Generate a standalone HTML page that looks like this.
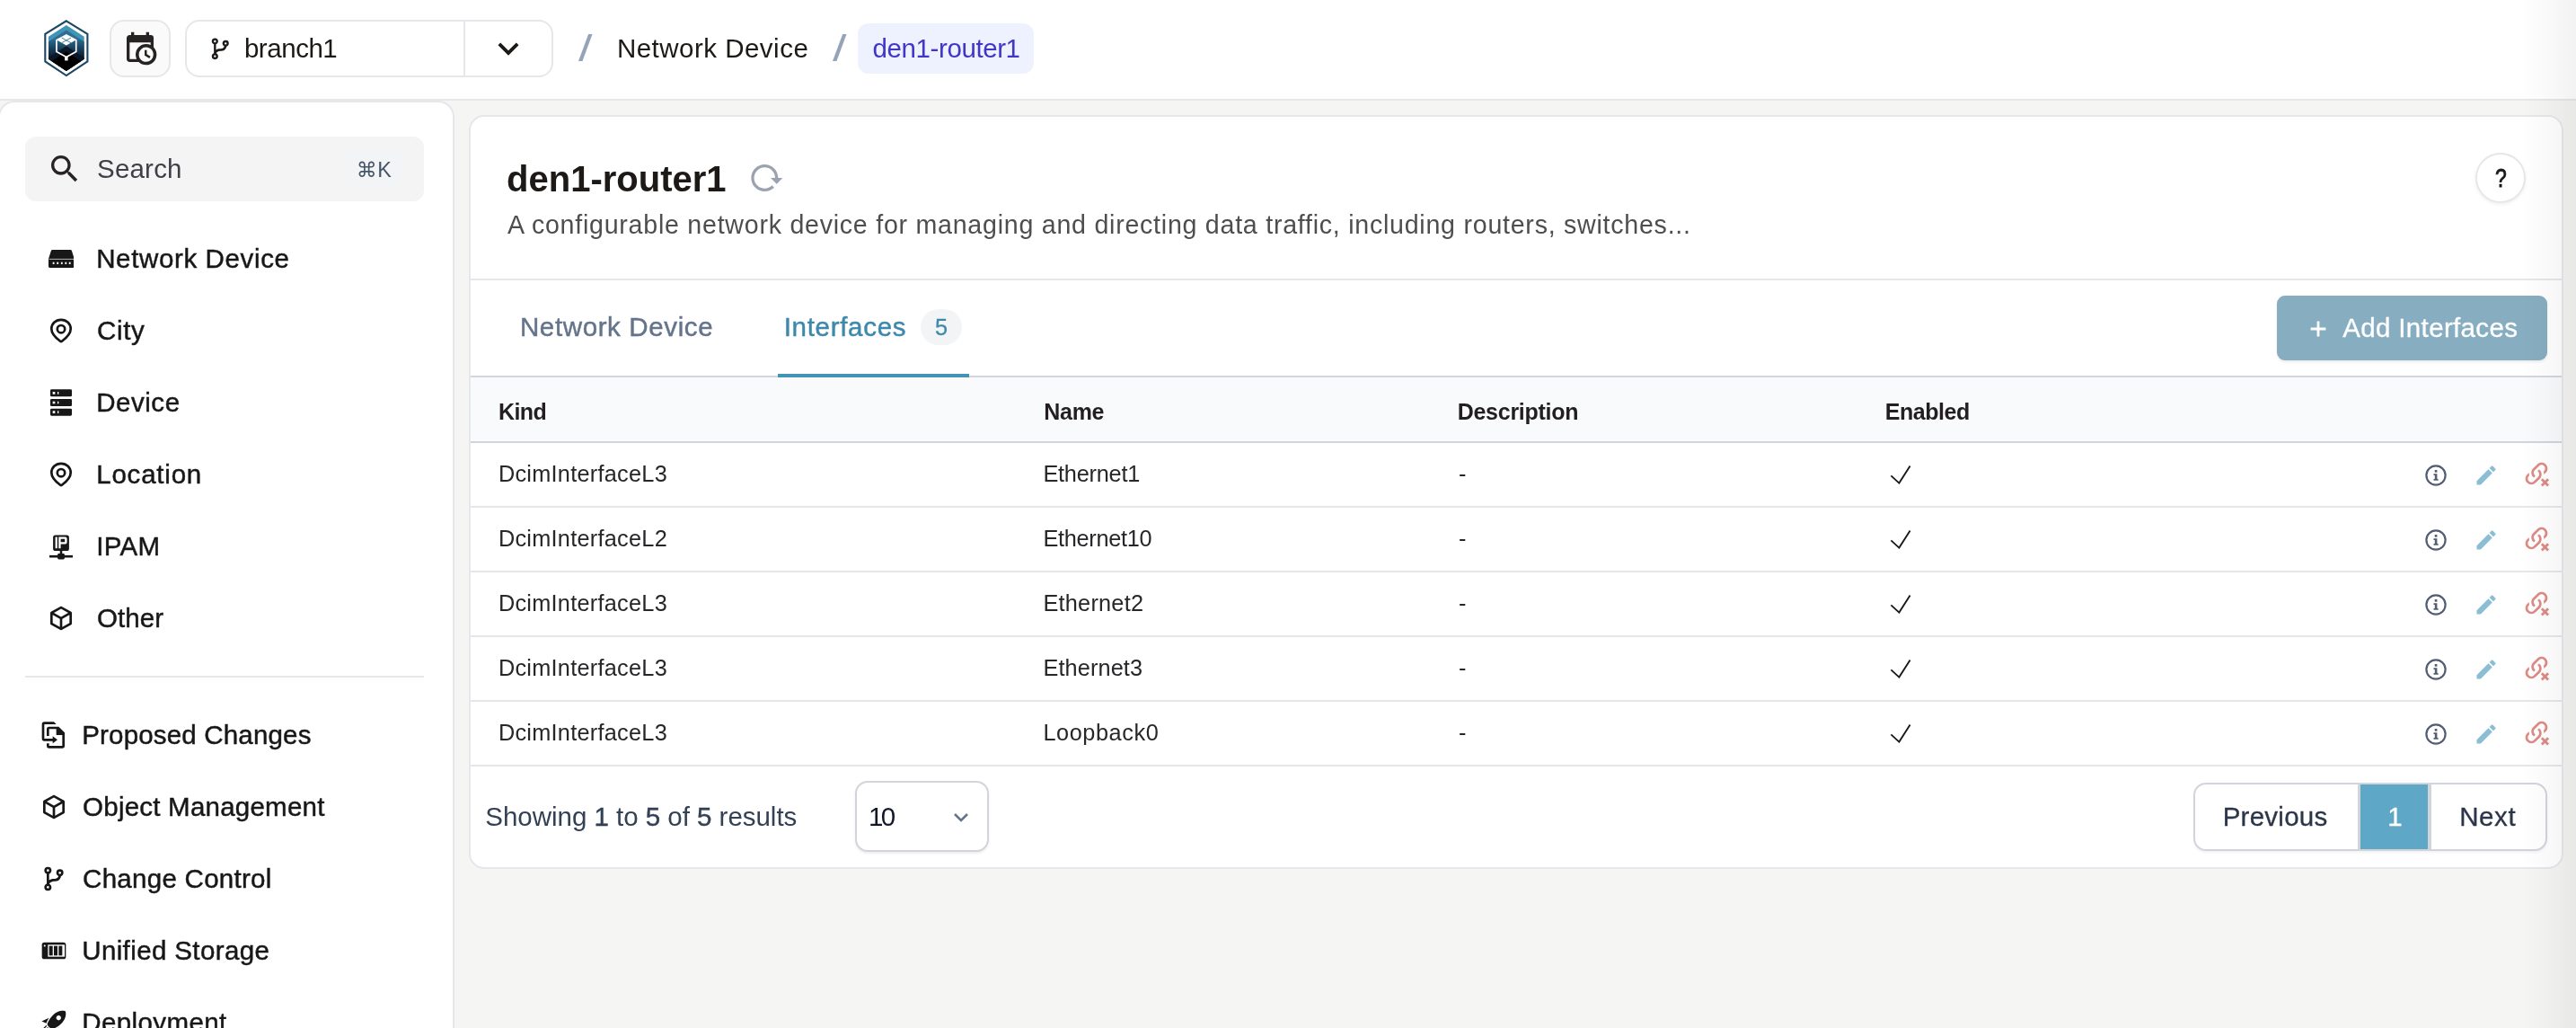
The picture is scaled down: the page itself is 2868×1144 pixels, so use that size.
<!DOCTYPE html>
<html lang="en">
<head>
<meta charset="utf-8">
<title>den1-router1 - Interfaces</title>
<style>
*{box-sizing:border-box;margin:0;padding:0}
html,body{width:2868px;height:1144px;overflow:hidden;background:#f5f5f4}
body{font-family:"Liberation Sans",Arial,sans-serif;color:#1c1917;position:relative}
.abs{position:absolute}
.t{position:absolute;white-space:nowrap;line-height:1}
.m{-webkit-text-stroke:0.4px #334155}
#app{position:absolute;left:0;top:0;width:2868px;height:1144px;will-change:transform}

</style>
</head>
<body>
<div id="app">
<div class="abs" style="left:0;top:0;width:2868px;height:112px;background:#fff;border-bottom:2px solid #e5e7eb"></div>
<svg class="abs" style="left:40px;top:14px" width="68" height="80" viewBox="0 0 68 80">
<defs>
<linearGradient id="lgA" gradientUnits="userSpaceOnUse" x1="0" y1="29" x2="0" y2="51"><stop offset="0" stop-color="#2e6f91"/><stop offset="0.5" stop-color="#1a405b"/><stop offset="1" stop-color="#0a1828"/></linearGradient>
<clipPath id="hexc"><polygon points="33.85,14.0 53.7,26.85 53.7,51.75 33.85,65.0 14.0,51.75 14.0,26.85"/></clipPath></defs>
<polygon points="33.85,9.3 57.4,23.9 57.4,54.4 33.85,70.1 10.3,54.4 10.3,23.9" fill="#fff" stroke="#1b4762" stroke-width="2.1" stroke-linejoin="miter"/>
<g clip-path="url(#hexc)">
<rect x="10" y="10" width="48" height="60" fill="#4194b8"/>
<polygon points="12,33.59 33.85,19.45 56,33.78 56,70 12,70" fill="url(#lgA)"/>
<polygon points="12,51.49 33.85,37.35 56,51.68 56,70 12,70" fill="#0b1727"/>
<polygon points="12,57.74 33.85,43.6 56,57.93 56,70 12,70" fill="#000"/>
</g>
<path d="M33.85,24.9 L44.75,30.7 V43.6 L33.85,49.4 L22.95,43.6 V30.7 Z" fill="none" stroke="#fff" stroke-width="1.7" stroke-linejoin="round"/>
<path d="M33.85,25.3 L44.1,30.75 L33.85,36.6 L23.6,30.75 Z" fill="#fff"/>
<g stroke="#2f7597" stroke-width="0.9"><line x1="28.7" y1="28.0" x2="39.0" y2="33.7"/><line x1="39.0" y1="28.0" x2="28.7" y2="33.7"/></g>
<rect x="32.1" y="49.0" width="3.5" height="4.4" fill="#fff"/>
</svg>
<div class="abs" style="left:122px;top:22px;width:68px;height:64px;border:2px solid #e5e7eb;border-radius:16px;background:#fafafa"></div>
<svg class="abs" style="left:136.00px;top:34.30px" width="40" height="40" viewBox="0 0 24 24"><path fill="#262322" d="M15,13H16.5V15.82L18.94,17.23L18.19,18.53L15,16.69V13M19,8H5V19H9.67C9.24,18.09 9,17.07 9,16A7,7 0 0,1 16,9C17.07,9 18.09,9.24 19,9.67V8M5,21C3.89,21 3,20.1 3,19V5C3,3.89 3.89,3 5,3H6V1H8V3H16V1H18V3H19A2,2 0 0,1 21,5V11.1C22.24,12.36 23,14.09 23,16A7,7 0 0,1 16,23C14.09,23 12.36,22.24 11.1,21H5M16,11.15A4.85,4.85 0 0,0 11.15,16C11.15,18.68 13.32,20.85 16,20.85A4.85,4.85 0 0,0 20.85,16C20.85,13.32 18.68,11.15 16,11.15Z"/></svg>
<div class="abs" style="left:206px;top:22px;width:410px;height:64px;border:2px solid #e5e7eb;border-radius:16px;background:#fff"></div>
<div class="abs" style="left:516px;top:24px;width:2px;height:60px;background:#e5e7eb"></div>
<svg class="abs" style="left:231.25px;top:40.05px" width="28.5" height="28.5" viewBox="0 0 24 24"><path fill="#1c1917" d="M13,14C9.64,14 8.54,15.35 8.18,16.24C9.25,16.7 10,17.76 10,19A3,3 0 0,1 7,22A3,3 0 0,1 4,19C4,17.69 4.83,16.58 6,16.17V7.83C4.83,7.42 4,6.31 4,5A3,3 0 0,1 7,2A3,3 0 0,1 10,5C10,6.31 9.17,7.42 8,7.83V13.12C8.88,12.47 10.16,12 12,12C14.67,12 15.56,10.66 15.85,9.77C14.77,9.32 14,8.25 14,7A3,3 0 0,1 17,4A3,3 0 0,1 20,7C20,8.34 19.12,9.5 17.91,9.86C17.65,11.29 16.68,14 13,14M7,18A1,1 0 0,0 6,19A1,1 0 0,0 7,20A1,1 0 0,0 8,19A1,1 0 0,0 7,18M7,4A1,1 0 0,0 6,5A1,1 0 0,0 7,6A1,1 0 0,0 8,5A1,1 0 0,0 7,4M17,6A1,1 0 0,0 16,7A1,1 0 0,0 17,8A1,1 0 0,0 18,7A1,1 0 0,0 17,6Z"/></svg>
<div class="t" id="branch1" style="left:271.93px;top:38.78px;font-size:29.5px;font-weight:400;color:#1c1917;letter-spacing:-0.460px;">branch1</div>
<svg class="abs" style="left:543.00px;top:31.00px" width="46" height="46" viewBox="0 0 24 24"><path fill="#1c1917" d="M7.41,8.58L12,13.17L16.59,8.58L18,10L12,16L6,10L7.41,8.58Z"/></svg>
<div class="t" id="sl1" style="left:643.76px;top:34.29px;font-size:41px;font-weight:400;color:#94a3b8;letter-spacing:0.000px;transform-origin:0 50%;transform:scaleX(1.36);">/</div>
<div class="t" id="bc1" style="left:686.95px;top:38.78px;font-size:29.5px;font-weight:400;color:#1c1917;letter-spacing:0.484px;">Network Device</div>
<div class="t" id="sl2" style="left:927.00px;top:34.29px;font-size:41px;font-weight:400;color:#94a3b8;letter-spacing:0.000px;transform-origin:0 50%;transform:scaleX(1.36);">/</div>
<div class="abs" style="left:955px;top:26px;width:196px;height:56px;border-radius:12px;background:#eef2ff"></div>
<div class="t" id="bc2" style="left:971.60px;top:38.78px;font-size:29.5px;font-weight:400;color:#4036c8;letter-spacing:-0.409px;">den1-router1</div>
<div class="abs" style="left:-2px;top:112px;width:508px;height:1100px;background:#fff;border:2px solid #e5e7eb;border-radius:18px 18px 0 0"></div>
<div class="abs" style="left:28px;top:152px;width:444px;height:72px;background:#f4f4f5;border-radius:12px"></div>
<svg class="abs" style="left:52.00px;top:167.50px" width="40" height="40" viewBox="0 0 24 24"><path fill="#262322" d="M9.5,3A6.5,6.5 0 0,1 16,9.5C16,11.11 15.41,12.59 14.44,13.73L14.71,14H15.5L20.5,19L19,20.5L14,15.5V14.71L13.73,14.44C12.59,15.41 11.11,16 9.5,16A6.5,6.5 0 0,1 3,9.5A6.5,6.5 0 0,1 9.5,3M9.5,5C7,5 5,7 5,9.5C5,12 7,14 9.5,14C12,14 14,12 14,9.5C14,7 12,5 9.5,5Z"/></svg>
<div class="t" id="search" style="left:108.10px;top:172.53px;font-size:29.5px;font-weight:400;color:#3f3f46;letter-spacing:0.180px;">Search</div>
<div class="abs" style="left:386px;top:168px;width:62px;height:40px;background:#f3f4f6;border-radius:9px"></div>
<div class="t" id="cmdk" style="left:396.80px;top:175.88px;font-size:25.3px;font-weight:400;color:#475569;letter-spacing:0.350px;"><span style="font-family:'DejaVu Sans',sans-serif;font-size:23px">&#8984;</span><span style="font-size:23.4px">K</span></div>
<svg class="abs" style="left:53.60px;top:278.00px" width="28.8" height="20" viewBox="0 0 28.8 20"><path fill="#171717" d="M4.4,0 H24.4 Q25.6,0 25.9,1.1 L28.6,9.6 Q28.8,10.2 28.8,10.8 V18.6 Q28.8,20 27.4,20 H1.4 Q0,20 0,18.6 V10.8 Q0,10.2 0.2,9.6 L2.9,1.1 Q3.2,0 4.4,0 Z"/><rect x="0.6" y="9.9" width="27.6" height="0.9" fill="#fff" opacity="0.75"/><rect x="4.70" y="13.7" width="1.8" height="2.3" fill="#fff"/><rect x="9.30" y="13.7" width="1.8" height="2.3" fill="#fff"/><rect x="13.90" y="13.7" width="1.8" height="2.3" fill="#fff"/><rect x="18.40" y="13.7" width="1.8" height="2.3" fill="#fff"/><rect x="22.80" y="13.7" width="1.8" height="2.3" fill="#fff"/></svg>
<div class="t" id="sb0" style="left:107.20px;top:273.03px;font-size:29.5px;font-weight:400;color:#171717;letter-spacing:0.629px;-webkit-text-stroke:0.45px #171717;">Network Device</div>
<svg class="abs" style="left:55.00px;top:353.50px" width="26" height="29" viewBox="0 0 26 29"><path fill="none" stroke="#171717" stroke-width="2.7" stroke-linejoin="round" d="M13,1.8 C19.2,1.8 23.7,6.3 23.7,12.0 C23.7,17.6 16.9,23.6 13.6,26.0 Q13,26.4 12.4,26.0 C9.1,23.6 2.3,17.6 2.3,12.0 C2.3,6.3 6.8,1.8 13,1.8 Z"/><circle cx="13" cy="12.2" r="4.2" fill="none" stroke="#171717" stroke-width="2.7"/></svg>
<div class="t" id="sb1" style="left:108.10px;top:353.03px;font-size:29.5px;font-weight:400;color:#171717;letter-spacing:0.600px;-webkit-text-stroke:0.45px #171717;">City</div>
<svg class="abs" style="left:51.80px;top:432.00px" width="32" height="32" viewBox="0 0 24 24"><path fill="#171717" d="M4,1H20A1,1 0 0,1 21,2V6A1,1 0 0,1 20,7H4A1,1 0 0,1 3,6V2A1,1 0 0,1 4,1M4,9H20A1,1 0 0,1 21,10V14A1,1 0 0,1 20,15H4A1,1 0 0,1 3,14V10A1,1 0 0,1 4,9M4,17H20A1,1 0 0,1 21,18V22A1,1 0 0,1 20,23H4A1,1 0 0,1 3,22V18A1,1 0 0,1 4,17M9,5H10V3H9V5M9,13H10V11H9V13M9,21H10V19H9V21M5,3V5H7V3H5M5,11V13H7V11H5M5,19V21H7V19H5Z"/></svg>
<div class="t" id="sb2" style="left:107.20px;top:433.03px;font-size:29.5px;font-weight:400;color:#171717;letter-spacing:0.540px;-webkit-text-stroke:0.45px #171717;">Device</div>
<svg class="abs" style="left:55.00px;top:513.50px" width="26" height="29" viewBox="0 0 26 29"><path fill="none" stroke="#171717" stroke-width="2.7" stroke-linejoin="round" d="M13,1.8 C19.2,1.8 23.7,6.3 23.7,12.0 C23.7,17.6 16.9,23.6 13.6,26.0 Q13,26.4 12.4,26.0 C9.1,23.6 2.3,17.6 2.3,12.0 C2.3,6.3 6.8,1.8 13,1.8 Z"/><circle cx="13" cy="12.2" r="4.2" fill="none" stroke="#171717" stroke-width="2.7"/></svg>
<div class="t" id="sb3" style="left:107.20px;top:513.03px;font-size:29.5px;font-weight:400;color:#171717;letter-spacing:0.793px;-webkit-text-stroke:0.45px #171717;">Location</div>
<svg class="abs" style="left:55.00px;top:594.70px" width="26" height="29" viewBox="0 0 26 29"><rect x="4.1" y="0.4" width="17.8" height="17.6" rx="2.6" fill="#171717"/><rect x="6.6" y="2.6" width="2.2" height="12.6" fill="#fff"/><path fill="#fff" fill-rule="evenodd" d="M10.3,2.6 H17.6 Q19.6,2.6 19.6,4.6 V8.4 Q19.6,10.4 17.6,10.4 H12.6 V15.2 H10.3 Z M12.6,4.8 V8.2 H17.2 V4.8 Z"/><rect x="11.7" y="18" width="2.6" height="4.6" fill="#171717"/><rect x="0" y="22.9" width="26" height="2.6" fill="#171717"/><rect x="9.1" y="21.0" width="7.8" height="6.4" rx="1.4" fill="#171717"/></svg>
<div class="t" id="sb4" style="left:107.20px;top:593.03px;font-size:29.5px;font-weight:400;color:#171717;letter-spacing:0.300px;-webkit-text-stroke:0.45px #171717;">IPAM</div>
<svg class="abs" style="left:52.00px;top:672.00px" width="32" height="32" viewBox="0 0 24 24"><path fill="#171717" d="M21,16.5C21,16.88 20.79,17.21 20.47,17.38L12.57,21.82C12.41,21.94 12.21,22 12,22C11.79,22 11.59,21.94 11.43,21.82L3.53,17.38C3.21,17.21 3,16.88 3,16.5V7.5C3,7.12 3.21,6.79 3.53,6.62L11.43,2.18C11.59,2.06 11.79,2 12,2C12.21,2 12.41,2.06 12.57,2.18L20.47,6.62C20.79,6.79 21,7.12 21,7.5V16.5M12,4.15L6.04,7.5L12,10.85L17.96,7.5L12,4.15M5,15.91L11,19.29V12.58L5,9.21V15.91M19,15.91V9.21L13,12.58V19.29L19,15.91Z"/></svg>
<div class="t" id="sb5" style="left:108.10px;top:673.03px;font-size:29.5px;font-weight:400;color:#171717;letter-spacing:0.033px;-webkit-text-stroke:0.45px #171717;">Other</div>
<div class="abs" style="left:28px;top:752px;width:444px;height:2px;background:#e5e7eb"></div>
<svg class="abs" style="left:44.00px;top:802.00px" width="32" height="32" viewBox="0 0 24 24"><path fill="#171717" d="M14,3L12,1H4A2,2 0 0,0 2,3V15A2,2 0 0,0 4,17H11V19L15,16L11,13V15H4V3H14M21,10V21A2,2 0 0,1 19,23H8A2,2 0 0,1 6,21V19H8V21H19V12H14V7H8V12.8H6V7A2,2 0 0,1 8,5H16L21,10Z"/></svg>
<div class="t" id="sl0x" style="left:91.20px;top:803.03px;font-size:29.5px;font-weight:400;color:#171717;letter-spacing:0.180px;-webkit-text-stroke:0.45px #171717;">Proposed Changes</div>
<svg class="abs" style="left:44.00px;top:882.00px" width="32" height="32" viewBox="0 0 24 24"><path fill="#171717" d="M21,16.5C21,16.88 20.79,17.21 20.47,17.38L12.57,21.82C12.41,21.94 12.21,22 12,22C11.79,22 11.59,21.94 11.43,21.82L3.53,17.38C3.21,17.21 3,16.88 3,16.5V7.5C3,7.12 3.21,6.79 3.53,6.62L11.43,2.18C11.59,2.06 11.79,2 12,2C12.21,2 12.41,2.06 12.57,2.18L20.47,6.62C20.79,6.79 21,7.12 21,7.5V16.5M12,4.15L6.04,7.5L12,10.85L17.96,7.5L12,4.15M5,15.91L11,19.29V12.58L5,9.21V15.91M19,15.91V9.21L13,12.58V19.29L19,15.91Z"/></svg>
<div class="t" id="sl1x" style="left:92.10px;top:883.03px;font-size:29.5px;font-weight:400;color:#171717;letter-spacing:0.225px;-webkit-text-stroke:0.45px #171717;">Object Management</div>
<svg class="abs" style="left:44.00px;top:962.00px" width="32" height="32" viewBox="0 0 24 24"><path fill="#171717" d="M13,14C9.64,14 8.54,15.35 8.18,16.24C9.25,16.7 10,17.76 10,19A3,3 0 0,1 7,22A3,3 0 0,1 4,19C4,17.69 4.83,16.58 6,16.17V7.83C4.83,7.42 4,6.31 4,5A3,3 0 0,1 7,2A3,3 0 0,1 10,5C10,6.31 9.17,7.42 8,7.83V13.12C8.88,12.47 10.16,12 12,12C14.67,12 15.56,10.66 15.85,9.77C14.77,9.32 14,8.25 14,7A3,3 0 0,1 17,4A3,3 0 0,1 20,7C20,8.34 19.12,9.5 17.91,9.86C17.65,11.29 16.68,14 13,14M7,18A1,1 0 0,0 6,19A1,1 0 0,0 7,20A1,1 0 0,0 8,19A1,1 0 0,0 7,18M7,4A1,1 0 0,0 6,5A1,1 0 0,0 7,6A1,1 0 0,0 8,5A1,1 0 0,0 7,4M17,6A1,1 0 0,0 16,7A1,1 0 0,0 17,8A1,1 0 0,0 18,7A1,1 0 0,0 17,6Z"/></svg>
<div class="t" id="sl2x" style="left:92.10px;top:963.03px;font-size:29.5px;font-weight:400;color:#171717;letter-spacing:0.277px;-webkit-text-stroke:0.45px #171717;">Change Control</div>
<svg class="abs" style="left:44.00px;top:1042.00px" width="32" height="32" viewBox="0 0 24 24"><path fill="#171717" d="M4,5H20A2,2 0 0,1 22,7V17A2,2 0 0,1 20,19H4A2,2 0 0,1 2,17V7A2,2 0 0,1 4,5Z"/><rect x="7" y="7" width="14" height="10" fill="#fff"/><rect x="8" y="8" width="3" height="8" fill="#171717"/><rect x="12" y="8" width="3" height="8" fill="#171717"/><rect x="16" y="8" width="3" height="8" fill="#171717"/><circle cx="4.3" cy="7.9" r="0.75" fill="#fff"/></svg>
<div class="t" id="sl3x" style="left:91.20px;top:1043.03px;font-size:29.5px;font-weight:400;color:#171717;letter-spacing:0.385px;-webkit-text-stroke:0.45px #171717;">Unified Storage</div>
<svg class="abs" style="left:44.00px;top:1122.00px" width="32" height="32" viewBox="0 0 24 24"><path fill="#171717" d="M13.13 22.19L11.5 18.36C13.07 17.78 14.54 17 15.9 16.09L13.13 22.19M5.64 12.5L1.81 10.87L7.91 8.1C7 9.46 6.22 10.93 5.64 12.5M21.61 2.39C21.61 2.39 16.66 .269 11 5.93C8.81 8.12 7.5 10.53 6.65 12.64C6.37 13.39 6.56 14.21 7.11 14.77L9.24 16.89C9.79 17.45 10.61 17.63 11.36 17.35C13.5 16.53 15.88 15.19 18.07 13C23.73 7.34 21.61 2.39 21.61 2.39M14.54 9.46C13.76 8.68 13.76 7.41 14.54 6.63S16.59 5.85 17.37 6.63C18.14 7.41 18.15 8.68 17.37 9.46C16.59 10.24 15.32 10.24 14.54 9.46M8.88 16.53L7.47 15.12L8.88 16.53M6.24 22L9.88 18.36C9.54 18.27 9.21 18.12 8.91 17.91L4.83 22H6.24M2 22H3.41L8.18 17.24L6.76 15.83L2 20.59V22M2 19.17L6.09 15.09C5.88 14.79 5.73 14.47 5.64 14.12L2 17.76V19.17Z"/></svg>
<div class="t" id="sl4x" style="left:91.20px;top:1123.03px;font-size:29.5px;font-weight:400;color:#171717;letter-spacing:0.400px;-webkit-text-stroke:0.45px #171717;">Deployment</div>
<div class="abs" style="left:522px;top:128px;width:2332px;height:839px;background:#fff;border:2px solid #e5e7eb;border-radius:17px;overflow:hidden"><div class="abs" style="left:0;top:180px;width:2328px;height:2px;background:#e5e7eb"></div><div class="abs" style="left:0;top:288px;width:2328px;height:2px;background:#d4d6dc"></div><div class="abs" style="left:0;top:290px;width:2328px;height:71px;background:#f9fafb"></div><div class="abs" style="left:0;top:361px;width:2328px;height:2px;background:#d1d5db"></div><div class="abs" style="left:0;top:433px;width:2328px;height:2px;background:#e5e7eb"></div><div class="abs" style="left:0;top:505px;width:2328px;height:2px;background:#e5e7eb"></div><div class="abs" style="left:0;top:577px;width:2328px;height:2px;background:#e5e7eb"></div><div class="abs" style="left:0;top:649px;width:2328px;height:2px;background:#e5e7eb"></div><div class="abs" style="left:0;top:721px;width:2328px;height:2px;background:#e5e7eb"></div></div>
<div class="t" id="title" style="left:564.10px;top:178.54px;font-size:40px;font-weight:700;color:#1c1917;letter-spacing:0.000px;">den1-router1</div>
<svg class="abs" style="left:832.70px;top:178.00px" width="40" height="40" viewBox="0 0 24 24"><path fill="#9ca3b0" d="M2 12C2 16.97 6.03 21 11 21C13.39 21 15.68 20.06 17.4 18.4L15.9 16.9C14.63 18.25 12.86 19 11 19C4.76 19 1.64 11.46 6.05 7.05C10.46 2.64 18 5.77 18 12H15L19 16H19.1L23 12H20C20 7.03 15.97 3 11 3C6.03 3 2 7.03 2 12Z"/></svg>
<div class="t" id="desc" style="left:565.00px;top:235.79px;font-size:28.6px;font-weight:400;color:#4e4e50;letter-spacing:0.746px;">A configurable network device for managing and directing data traffic, including routers, switches...</div>
<div class="abs" style="left:2756px;top:170px;width:56px;height:56px;border-radius:50%;border:2px solid #e5e7eb;background:#fff;box-shadow:0 2px 4px rgba(0,0,0,0.06)"></div>
<div class="t" id="help" style="left:2777.77px;top:183.03px;font-size:29.5px;font-weight:400;color:#18181b;letter-spacing:0.000px;-webkit-text-stroke:0.9px #18181b;transform-origin:0 50%;transform:scaleX(0.78);">?</div>
<div class="t" id="tab1" style="left:578.94px;top:348.78px;font-size:29.5px;font-weight:400;color:#64748b;letter-spacing:0.623px;-webkit-text-stroke:0.45px #64748b;">Network Device</div>
<div class="t" id="tab2" style="left:872.70px;top:348.78px;font-size:29.5px;font-weight:400;color:#3d89ab;letter-spacing:0.700px;-webkit-text-stroke:0.45px #3d89ab;">Interfaces</div>
<div class="abs" style="left:1025px;top:344px;width:46px;height:40px;border-radius:20px;background:#f3f4f6"></div>
<div class="t" id="badge" style="left:1041.10px;top:351.58px;font-size:25.3px;font-weight:400;color:#3d89ab;letter-spacing:0.000px;-webkit-text-stroke:0.3px #3d89ab;">5</div>
<div class="abs" style="left:866px;top:416px;width:213px;height:4px;background:#4393b6"></div>
<div class="abs" style="left:2535px;top:329px;width:301px;height:72px;border-radius:9px;background:#87adc0;box-shadow:0 2px 3px rgba(0,0,0,0.08)"></div>
<svg class="abs" style="left:2571.2px;top:355.6px" width="20" height="20" viewBox="0 0 20 20"><path d="M10,1.6V18.4M1.6,10H18.4" stroke="#fff" stroke-width="2.8" fill="none"/></svg>
<div class="t" id="addi" style="left:2608.23px;top:349.53px;font-size:29.5px;font-weight:400;color:#fff;letter-spacing:0.347px;-webkit-text-stroke:0.3px #fff;">Add Interfaces</div>
<div class="t" id="hk" style="left:554.93px;top:445.84px;font-size:25.0px;font-weight:700;color:#231f20;letter-spacing:-0.600px;">Kind</div>
<div class="t" id="hn" style="left:1162.34px;top:445.84px;font-size:25.0px;font-weight:700;color:#231f20;letter-spacing:-0.300px;">Name</div>
<div class="t" id="hd" style="left:1622.70px;top:445.84px;font-size:25.0px;font-weight:700;color:#231f20;letter-spacing:-0.268px;">Description</div>
<div class="t" id="he" style="left:2098.70px;top:445.84px;font-size:25.0px;font-weight:700;color:#231f20;letter-spacing:-0.450px;">Enabled</div>
<div class="t" id="rk0" style="left:554.93px;top:514.98px;font-size:25.3px;font-weight:400;color:#27272a;letter-spacing:0.257px;">DcimInterfaceL3</div>
<div class="t" id="rn0" style="left:1161.43px;top:514.98px;font-size:25.3px;font-weight:400;color:#27272a;letter-spacing:-0.225px;">Ethernet1</div>
<div class="t" id="rd0" style="left:1624.10px;top:514.98px;font-size:25.3px;font-weight:400;color:#27272a;letter-spacing:0.000px;">-</div>
<svg class="abs" style="left:2100px;top:513px" width="32" height="32" viewBox="0 0 32 32"><path d="M5.4,16.4 L14.4,24.6 L26.6,5.6" fill="none" stroke="#1c1917" stroke-width="1.9"/></svg>
<svg class="abs" style="left:2698.00px;top:515.00px" width="28" height="28" viewBox="0 0 28 28"><circle cx="14" cy="14" r="10.6" fill="none" stroke="#535d72" stroke-width="2.2"/><rect x="12.7" y="8.0" width="2.7" height="2.7" fill="#535d72"/><path fill="#535d72" d="M11.5,12.2 H15.4 V18.0 H16.6 V19.8 H11.5 V18.0 H12.8 V14.0 H11.5 Z"/></svg>
<svg class="abs" style="left:2754.00px;top:515.20px" width="28" height="28" viewBox="0 0 24 24"><path fill="#8bbdd4" d="M20.71,7.04C21.1,6.65 21.1,6 20.71,5.63L18.37,3.29C18,2.9 17.35,2.9 16.96,3.29L15.12,5.12L18.87,8.87M3,17.25V21H6.75L17.81,9.93L14.06,6.18L3,17.25Z"/></svg>
<svg class="abs" style="left:2807.90px;top:510.60px" width="32" height="32" viewBox="0 0 24 24"><path fill="#de8a84" d="M10.59,13.41C11,13.8 11,14.44 10.59,14.83C10.2,15.22 9.56,15.22 9.17,14.83C7.22,12.88 7.22,9.71 9.17,7.76V7.76L12.71,4.22C14.66,2.27 17.83,2.27 19.78,4.22C21.73,6.17 21.73,9.34 19.78,11.29L18.29,12.78C18.3,11.96 18.17,11.14 17.89,10.36L18.36,9.88C19.54,8.71 19.54,6.81 18.36,5.64C17.19,4.46 15.29,4.46 14.12,5.64L10.59,9.17C9.41,10.34 9.41,12.24 10.59,13.41M13.41,9.17C13.8,8.78 14.44,8.78 14.83,9.17C16.78,11.12 16.78,14.29 14.83,16.24V16.24L11.29,19.78C9.34,21.73 6.17,21.73 4.22,19.78C2.27,17.83 2.27,14.66 4.22,12.71L5.71,11.22C5.7,12.04 5.83,12.86 6.11,13.65L5.64,14.12C4.46,15.29 4.46,17.19 5.64,18.36C6.81,19.54 8.71,19.54 9.88,18.36L13.41,14.83C14.59,13.66 14.59,11.76 13.41,10.59C13,10.2 13,9.56 13.41,9.17Z"/><path d="M16.4,16.65 L21.8,22.05 M21.8,16.65 L16.4,22.05" stroke="#de8a84" stroke-width="2.15" fill="none"/></svg>
<div class="t" id="rk1" style="left:554.93px;top:586.98px;font-size:25.3px;font-weight:400;color:#27272a;letter-spacing:0.257px;">DcimInterfaceL2</div>
<div class="t" id="rn1" style="left:1161.43px;top:586.98px;font-size:25.3px;font-weight:400;color:#27272a;letter-spacing:-0.300px;">Ethernet10</div>
<div class="t" id="rd1" style="left:1624.10px;top:586.98px;font-size:25.3px;font-weight:400;color:#27272a;letter-spacing:0.000px;">-</div>
<svg class="abs" style="left:2100px;top:585px" width="32" height="32" viewBox="0 0 32 32"><path d="M5.4,16.4 L14.4,24.6 L26.6,5.6" fill="none" stroke="#1c1917" stroke-width="1.9"/></svg>
<svg class="abs" style="left:2698.00px;top:587.00px" width="28" height="28" viewBox="0 0 28 28"><circle cx="14" cy="14" r="10.6" fill="none" stroke="#535d72" stroke-width="2.2"/><rect x="12.7" y="8.0" width="2.7" height="2.7" fill="#535d72"/><path fill="#535d72" d="M11.5,12.2 H15.4 V18.0 H16.6 V19.8 H11.5 V18.0 H12.8 V14.0 H11.5 Z"/></svg>
<svg class="abs" style="left:2754.00px;top:587.20px" width="28" height="28" viewBox="0 0 24 24"><path fill="#8bbdd4" d="M20.71,7.04C21.1,6.65 21.1,6 20.71,5.63L18.37,3.29C18,2.9 17.35,2.9 16.96,3.29L15.12,5.12L18.87,8.87M3,17.25V21H6.75L17.81,9.93L14.06,6.18L3,17.25Z"/></svg>
<svg class="abs" style="left:2807.90px;top:582.60px" width="32" height="32" viewBox="0 0 24 24"><path fill="#de8a84" d="M10.59,13.41C11,13.8 11,14.44 10.59,14.83C10.2,15.22 9.56,15.22 9.17,14.83C7.22,12.88 7.22,9.71 9.17,7.76V7.76L12.71,4.22C14.66,2.27 17.83,2.27 19.78,4.22C21.73,6.17 21.73,9.34 19.78,11.29L18.29,12.78C18.3,11.96 18.17,11.14 17.89,10.36L18.36,9.88C19.54,8.71 19.54,6.81 18.36,5.64C17.19,4.46 15.29,4.46 14.12,5.64L10.59,9.17C9.41,10.34 9.41,12.24 10.59,13.41M13.41,9.17C13.8,8.78 14.44,8.78 14.83,9.17C16.78,11.12 16.78,14.29 14.83,16.24V16.24L11.29,19.78C9.34,21.73 6.17,21.73 4.22,19.78C2.27,17.83 2.27,14.66 4.22,12.71L5.71,11.22C5.7,12.04 5.83,12.86 6.11,13.65L5.64,14.12C4.46,15.29 4.46,17.19 5.64,18.36C6.81,19.54 8.71,19.54 9.88,18.36L13.41,14.83C14.59,13.66 14.59,11.76 13.41,10.59C13,10.2 13,9.56 13.41,9.17Z"/><path d="M16.4,16.65 L21.8,22.05 M21.8,16.65 L16.4,22.05" stroke="#de8a84" stroke-width="2.15" fill="none"/></svg>
<div class="t" id="rk2" style="left:554.93px;top:658.98px;font-size:25.3px;font-weight:400;color:#27272a;letter-spacing:0.257px;">DcimInterfaceL3</div>
<div class="t" id="rn2" style="left:1161.43px;top:658.98px;font-size:25.3px;font-weight:400;color:#27272a;letter-spacing:0.230px;">Ethernet2</div>
<div class="t" id="rd2" style="left:1624.10px;top:658.98px;font-size:25.3px;font-weight:400;color:#27272a;letter-spacing:0.000px;">-</div>
<svg class="abs" style="left:2100px;top:657px" width="32" height="32" viewBox="0 0 32 32"><path d="M5.4,16.4 L14.4,24.6 L26.6,5.6" fill="none" stroke="#1c1917" stroke-width="1.9"/></svg>
<svg class="abs" style="left:2698.00px;top:659.00px" width="28" height="28" viewBox="0 0 28 28"><circle cx="14" cy="14" r="10.6" fill="none" stroke="#535d72" stroke-width="2.2"/><rect x="12.7" y="8.0" width="2.7" height="2.7" fill="#535d72"/><path fill="#535d72" d="M11.5,12.2 H15.4 V18.0 H16.6 V19.8 H11.5 V18.0 H12.8 V14.0 H11.5 Z"/></svg>
<svg class="abs" style="left:2754.00px;top:659.20px" width="28" height="28" viewBox="0 0 24 24"><path fill="#8bbdd4" d="M20.71,7.04C21.1,6.65 21.1,6 20.71,5.63L18.37,3.29C18,2.9 17.35,2.9 16.96,3.29L15.12,5.12L18.87,8.87M3,17.25V21H6.75L17.81,9.93L14.06,6.18L3,17.25Z"/></svg>
<svg class="abs" style="left:2807.90px;top:654.60px" width="32" height="32" viewBox="0 0 24 24"><path fill="#de8a84" d="M10.59,13.41C11,13.8 11,14.44 10.59,14.83C10.2,15.22 9.56,15.22 9.17,14.83C7.22,12.88 7.22,9.71 9.17,7.76V7.76L12.71,4.22C14.66,2.27 17.83,2.27 19.78,4.22C21.73,6.17 21.73,9.34 19.78,11.29L18.29,12.78C18.3,11.96 18.17,11.14 17.89,10.36L18.36,9.88C19.54,8.71 19.54,6.81 18.36,5.64C17.19,4.46 15.29,4.46 14.12,5.64L10.59,9.17C9.41,10.34 9.41,12.24 10.59,13.41M13.41,9.17C13.8,8.78 14.44,8.78 14.83,9.17C16.78,11.12 16.78,14.29 14.83,16.24V16.24L11.29,19.78C9.34,21.73 6.17,21.73 4.22,19.78C2.27,17.83 2.27,14.66 4.22,12.71L5.71,11.22C5.7,12.04 5.83,12.86 6.11,13.65L5.64,14.12C4.46,15.29 4.46,17.19 5.64,18.36C6.81,19.54 8.71,19.54 9.88,18.36L13.41,14.83C14.59,13.66 14.59,11.76 13.41,10.59C13,10.2 13,9.56 13.41,9.17Z"/><path d="M16.4,16.65 L21.8,22.05 M21.8,16.65 L16.4,22.05" stroke="#de8a84" stroke-width="2.15" fill="none"/></svg>
<div class="t" id="rk3" style="left:554.93px;top:730.98px;font-size:25.3px;font-weight:400;color:#27272a;letter-spacing:0.257px;">DcimInterfaceL3</div>
<div class="t" id="rn3" style="left:1161.43px;top:730.98px;font-size:25.3px;font-weight:400;color:#27272a;letter-spacing:0.113px;">Ethernet3</div>
<div class="t" id="rd3" style="left:1624.10px;top:730.98px;font-size:25.3px;font-weight:400;color:#27272a;letter-spacing:0.000px;">-</div>
<svg class="abs" style="left:2100px;top:729px" width="32" height="32" viewBox="0 0 32 32"><path d="M5.4,16.4 L14.4,24.6 L26.6,5.6" fill="none" stroke="#1c1917" stroke-width="1.9"/></svg>
<svg class="abs" style="left:2698.00px;top:731.00px" width="28" height="28" viewBox="0 0 28 28"><circle cx="14" cy="14" r="10.6" fill="none" stroke="#535d72" stroke-width="2.2"/><rect x="12.7" y="8.0" width="2.7" height="2.7" fill="#535d72"/><path fill="#535d72" d="M11.5,12.2 H15.4 V18.0 H16.6 V19.8 H11.5 V18.0 H12.8 V14.0 H11.5 Z"/></svg>
<svg class="abs" style="left:2754.00px;top:731.20px" width="28" height="28" viewBox="0 0 24 24"><path fill="#8bbdd4" d="M20.71,7.04C21.1,6.65 21.1,6 20.71,5.63L18.37,3.29C18,2.9 17.35,2.9 16.96,3.29L15.12,5.12L18.87,8.87M3,17.25V21H6.75L17.81,9.93L14.06,6.18L3,17.25Z"/></svg>
<svg class="abs" style="left:2807.90px;top:726.60px" width="32" height="32" viewBox="0 0 24 24"><path fill="#de8a84" d="M10.59,13.41C11,13.8 11,14.44 10.59,14.83C10.2,15.22 9.56,15.22 9.17,14.83C7.22,12.88 7.22,9.71 9.17,7.76V7.76L12.71,4.22C14.66,2.27 17.83,2.27 19.78,4.22C21.73,6.17 21.73,9.34 19.78,11.29L18.29,12.78C18.3,11.96 18.17,11.14 17.89,10.36L18.36,9.88C19.54,8.71 19.54,6.81 18.36,5.64C17.19,4.46 15.29,4.46 14.12,5.64L10.59,9.17C9.41,10.34 9.41,12.24 10.59,13.41M13.41,9.17C13.8,8.78 14.44,8.78 14.83,9.17C16.78,11.12 16.78,14.29 14.83,16.24V16.24L11.29,19.78C9.34,21.73 6.17,21.73 4.22,19.78C2.27,17.83 2.27,14.66 4.22,12.71L5.71,11.22C5.7,12.04 5.83,12.86 6.11,13.65L5.64,14.12C4.46,15.29 4.46,17.19 5.64,18.36C6.81,19.54 8.71,19.54 9.88,18.36L13.41,14.83C14.59,13.66 14.59,11.76 13.41,10.59C13,10.2 13,9.56 13.41,9.17Z"/><path d="M16.4,16.65 L21.8,22.05 M21.8,16.65 L16.4,22.05" stroke="#de8a84" stroke-width="2.15" fill="none"/></svg>
<div class="t" id="rk4" style="left:554.93px;top:802.98px;font-size:25.3px;font-weight:400;color:#27272a;letter-spacing:0.257px;">DcimInterfaceL3</div>
<div class="t" id="rn4" style="left:1161.43px;top:802.98px;font-size:25.3px;font-weight:400;color:#27272a;letter-spacing:0.562px;">Loopback0</div>
<div class="t" id="rd4" style="left:1624.10px;top:802.98px;font-size:25.3px;font-weight:400;color:#27272a;letter-spacing:0.000px;">-</div>
<svg class="abs" style="left:2100px;top:801px" width="32" height="32" viewBox="0 0 32 32"><path d="M5.4,16.4 L14.4,24.6 L26.6,5.6" fill="none" stroke="#1c1917" stroke-width="1.9"/></svg>
<svg class="abs" style="left:2698.00px;top:803.00px" width="28" height="28" viewBox="0 0 28 28"><circle cx="14" cy="14" r="10.6" fill="none" stroke="#535d72" stroke-width="2.2"/><rect x="12.7" y="8.0" width="2.7" height="2.7" fill="#535d72"/><path fill="#535d72" d="M11.5,12.2 H15.4 V18.0 H16.6 V19.8 H11.5 V18.0 H12.8 V14.0 H11.5 Z"/></svg>
<svg class="abs" style="left:2754.00px;top:803.20px" width="28" height="28" viewBox="0 0 24 24"><path fill="#8bbdd4" d="M20.71,7.04C21.1,6.65 21.1,6 20.71,5.63L18.37,3.29C18,2.9 17.35,2.9 16.96,3.29L15.12,5.12L18.87,8.87M3,17.25V21H6.75L17.81,9.93L14.06,6.18L3,17.25Z"/></svg>
<svg class="abs" style="left:2807.90px;top:798.60px" width="32" height="32" viewBox="0 0 24 24"><path fill="#de8a84" d="M10.59,13.41C11,13.8 11,14.44 10.59,14.83C10.2,15.22 9.56,15.22 9.17,14.83C7.22,12.88 7.22,9.71 9.17,7.76V7.76L12.71,4.22C14.66,2.27 17.83,2.27 19.78,4.22C21.73,6.17 21.73,9.34 19.78,11.29L18.29,12.78C18.3,11.96 18.17,11.14 17.89,10.36L18.36,9.88C19.54,8.71 19.54,6.81 18.36,5.64C17.19,4.46 15.29,4.46 14.12,5.64L10.59,9.17C9.41,10.34 9.41,12.24 10.59,13.41M13.41,9.17C13.8,8.78 14.44,8.78 14.83,9.17C16.78,11.12 16.78,14.29 14.83,16.24V16.24L11.29,19.78C9.34,21.73 6.17,21.73 4.22,19.78C2.27,17.83 2.27,14.66 4.22,12.71L5.71,11.22C5.7,12.04 5.83,12.86 6.11,13.65L5.64,14.12C4.46,15.29 4.46,17.19 5.64,18.36C6.81,19.54 8.71,19.54 9.88,18.36L13.41,14.83C14.59,13.66 14.59,11.76 13.41,10.59C13,10.2 13,9.56 13.41,9.17Z"/><path d="M16.4,16.65 L21.8,22.05 M21.8,16.65 L16.4,22.05" stroke="#de8a84" stroke-width="2.15" fill="none"/></svg>
<div class="t" id="showing" style="left:540.34px;top:893.63px;font-size:29.5px;font-weight:400;color:#334155;letter-spacing:-0.028px;">Showing <span class="m">1</span> to <span class="m">5</span> of <span class="m">5</span> results</div>
<div class="abs" style="left:952px;top:869px;width:149px;height:79px;border:2px solid #d1d5db;border-radius:14px;background:#fff;box-shadow:0 2px 3px rgba(0,0,0,0.07)"></div>
<div class="t" id="ten" style="left:966.94px;top:893.83px;font-size:29.5px;font-weight:400;color:#111827;letter-spacing:-2.700px;">10</div>
<svg class="abs" style="left:1058px;top:898px" width="24" height="24" viewBox="0 0 24 24"><path d="M5,8 L12,15 L19,8" fill="none" stroke="#64748b" stroke-width="2.6"/></svg>
<div class="abs" style="left:2442px;top:871px;width:394px;height:76px;border:2px solid #d1d5db;border-radius:14px;background:#fff;box-shadow:0 2px 3px rgba(0,0,0,0.05);overflow:hidden"><div class="abs" style="left:180.5px;top:0;width:79px;height:72px;background:#d1d5db"></div><div class="abs" style="left:184px;top:0;width:75px;height:72px;background:#5fa7c6"></div><div class="abs" style="left:259px;top:0;width:3.6px;height:72px;background:#d1d5db"></div></div>
<div class="t" id="prev" style="left:2474.70px;top:893.93px;font-size:29.5px;font-weight:400;color:#2b3648;letter-spacing:0.257px;-webkit-text-stroke:0.3px #2b3648;">Previous</div>
<div class="t" id="one" style="left:2658.20px;top:893.93px;font-size:29.5px;font-weight:400;color:#fff;letter-spacing:0.000px;-webkit-text-stroke:0.3px #fff;">1</div>
<div class="t" id="next" style="left:2738.20px;top:893.93px;font-size:29.5px;font-weight:400;color:#2b3648;letter-spacing:0.600px;-webkit-text-stroke:0.3px #2b3648;">Next</div>
<div class="abs" style="left:2806px;top:0;width:62px;height:1144px;background:linear-gradient(to right,rgba(0,0,0,0) 0%,rgba(0,0,0,0.018) 45%,rgba(0,0,0,0.052) 100%);pointer-events:none"></div>
</div>
</body>
</html>
